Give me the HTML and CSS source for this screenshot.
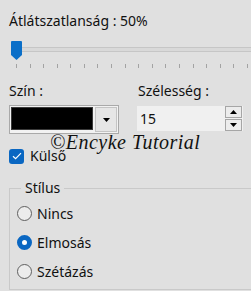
FILE: index.html
```html
<!DOCTYPE html>
<html>
<head>
<meta charset="utf-8">
<link rel="stylesheet" href="styles.css">
</head>
<body>
<div class="panel">
  <div class="title">Átlátszatlanság : 50%</div>
  <div class="slider">
    <div class="track"></div>
    <div class="thumb">
      <svg width="11" height="19" viewBox="0 0 11 19"><path d="M1 0H10A1 1 0 0 1 11 1V14L5.5 19L0 14V1A1 1 0 0 1 1 0Z" fill="#0b6fc8"/></svg>
    </div>
    <div class="ticks">
      <span></span><span></span><span></span><span></span><span></span><span></span>
      <span></span><span></span><span></span><span></span><span></span><span></span>
      <span></span><span></span><span></span><span></span><span></span><span></span>
    </div>
  </div>
  <div class="fields">
    <div class="field">
      <div class="label">Szín :</div>
      <div class="combo">
        <div class="swatch"></div>
        <div class="drop">
          <svg width="7" height="4" viewBox="0 0 7 4"><path d="M0 0H7L3.5 4Z" fill="#000"/></svg>
        </div>
      </div>
    </div>
    <div class="field">
      <div class="label">Szélesség :</div>
      <div class="spin">
        <div class="spin-value">15</div>
        <div class="spin-buttons">
          <div class="spin-btn"><svg width="7" height="4" viewBox="0 0 7 4"><path d="M0 4H7L3.5 0Z" fill="#000"/></svg></div>
          <div class="spin-btn"><svg width="7" height="4" viewBox="0 0 7 4"><path d="M0 0H7L3.5 4Z" fill="#000"/></svg></div>
        </div>
      </div>
    </div>
  </div>
  <div class="check-row">
    <span class="checkbox">
      <svg width="10" height="8" viewBox="0 0 10 8"><path d="M1 4.2L3.6 6.6L9 1.2" fill="none" stroke="#fff" stroke-width="1.2"/></svg>
    </span>
    <span class="check-label">Külső</span>
  </div>
  <fieldset class="group">
    <legend>Stílus</legend>
    <div class="radio-row"><span class="radio"></span><span>Nincs</span></div>
    <div class="radio-row"><span class="radio checked"></span><span>Elmosás</span></div>
    <div class="radio-row"><span class="radio"></span><span>Szétázás</span></div>
  </fieldset>
  <div class="watermark">©Encyke Tutorial</div>
</div>
</body>
</html>
```
FILE: styles.css
```css
html, body {
  margin: 0;
  padding: 0;
  background: #e0e0e0;
  overflow: hidden;
}
body {
  width: 251px;
  height: 291px;
  font-family: "Noto Sans", "Open Sans", sans-serif;
  font-size: 14px;
  color: #111;
}
.panel {
  position: relative;
  padding: 11px 0 0 9px;
}
.title {
  line-height: 19px;
  height: 19px;
}
.slider {
  position: relative;
  width: 242px;
  height: 32px;
  margin-top: 6px;
}
.track {
  position: absolute;
  left: 2px;
  top: 11px;
  right: 0;
  height: 3px;
  border-top: 1px solid #c6c6c6;
  border-bottom: 1px solid #c6c6c6;
  background: #d9d9d9;
}
.thumb {
  position: absolute;
  left: 2px;
  top: 5px;
  width: 11px;
  height: 19px;
}
.thumb svg { display: block; }
.ticks {
  position: absolute;
  left: 7px;
  top: 28px;
  width: 232px;
  height: 4px;
  display: flex;
  justify-content: space-between;
}
.ticks span {
  width: 1px;
  height: 4px;
  background: #a3a3a3;
}
.fields {
  display: grid;
  grid-template-columns: 129px 106px;
  margin-top: 13px;
}
.label {
  line-height: 19px;
  height: 19px;
}
.combo {
  margin-top: 5px;
  width: 106px;
  height: 25px;
  border: 1px solid #a9a9a9;
  background: #f2f2f2;
  display: flex;
  padding: 1px;
  box-sizing: content-box;
}
.swatch {
  width: 82px;
  height: 23px;
  background: #000;
  border: 1px solid #3a3a3a;
  box-sizing: border-box;
}
.drop {
  flex: 1;
  margin-left: 2px;
  background: #e6e6e6;
  border: 1px solid #c4c4c4;
  display: flex;
  align-items: center;
  justify-content: center;
}
.drop svg { display: block; }
.spin {
  margin-top: 6px;
  margin-left: -1px;
  width: 106px;
  height: 25px;
  background: #f0f0f0;
  display: flex;
}
.spin-value {
  flex: 1;
  padding-left: 3px;
  line-height: 25px;
  font-size: 14px;
}
.spin-buttons {
  width: 17px;
  display: flex;
  flex-direction: column;
  gap: 1px;
  padding: 0 1px 0 0;
}
.spin-btn {
  flex: 1;
  border: 1px solid #a6a6a6;
  background: #ececec;
  display: flex;
  align-items: center;
  justify-content: center;
}
.spin-btn svg { display: block; }
.check-row {
  display: flex;
  align-items: center;
  gap: 6px;
  margin-top: 14px;
  height: 16px;
}
.checkbox {
  width: 15px;
  height: 15px;
  border-radius: 3px;
  background: #0a67c2;
  display: flex;
  align-items: center;
  justify-content: center;
}
.checkbox svg { display: block; }
.check-label {
  line-height: 16px;
}
.group {
  margin: 15px 0 0 0;
  padding: 2px 0 0 7px;
  width: 242px;
  height: 111px;
  border: 1px solid #c9c9c9;
  border-right: none;
  box-sizing: border-box;
}
.group legend {
  padding: 0 4px 0 4px;
  margin-left: 4px;
  line-height: 18px;
}
.radio-row {
  display: flex;
  align-items: center;
  gap: 5px;
  height: 29px;
}
.radio {
  width: 15px;
  height: 15px;
  border-radius: 50%;
  border: 1px solid #5f5f5f;
  box-sizing: border-box;
  background: #ececec;
}
.radio.checked {
  border: 5px solid #0a67c2;
  background: #fff;
}
.watermark {
  position: absolute;
  left: 50px;
  top: 129px;
  font-family: "Liberation Serif", serif;
  font-style: italic;
  font-size: 20px;
  line-height: 26px;
  color: #111;
  letter-spacing: 0.5px;
}
```
